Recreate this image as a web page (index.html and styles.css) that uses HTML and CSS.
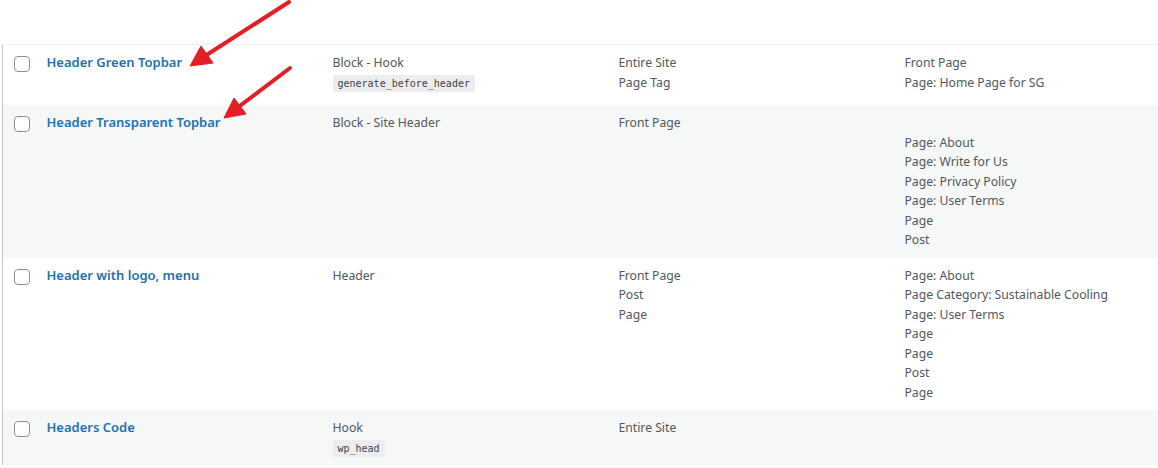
FILE: index.html
```html
<!DOCTYPE html>
<html lang="en">
<head>
<meta charset="utf-8">
<title>Elements</title>
<link rel="stylesheet" href="styles.css">
</head>
<body>
<div class="page">
  <div class="spacer"></div>
  <table class="list">
    <colgroup>
      <col class="c-check">
      <col class="c-col">
      <col class="c-col">
      <col class="c-col">
      <col>
    </colgroup>
    <tbody>
      <tr class="row r1">
        <th class="check"><span class="box"></span></th>
        <td><a class="title" href="#">Header Green Topbar</a></td>
        <td>Block - Hook<br><code class="hook">generate_before_header</code></td>
        <td>Entire Site<br>Page Tag</td>
        <td>Front Page<br>Page: Home Page for SG</td>
      </tr>
      <tr class="row alt">
        <th class="check"><span class="box"></span></th>
        <td><a class="title" href="#">Header Transparent Topbar</a></td>
        <td>Block - Site Header</td>
        <td>Front Page</td>
        <td><br>Page: About<br>Page: Write for Us<br>Page: Privacy Policy<br>Page: User Terms<br>Page<br>Post</td>
      </tr>
      <tr class="row">
        <th class="check"><span class="box"></span></th>
        <td><a class="title" href="#">Header with logo, menu</a></td>
        <td>Header</td>
        <td>Front Page<br>Post<br>Page</td>
        <td>Page: About<br>Page Category: Sustainable Cooling<br>Page: User Terms<br>Page<br>Page<br>Post<br>Page</td>
      </tr>
      <tr class="row alt">
        <th class="check"><span class="box"></span></th>
        <td><a class="title" href="#">Headers Code</a></td>
        <td>Hook<br><code class="hook">wp_head</code></td>
        <td>Entire Site</td>
        <td></td>
      </tr>
    </tbody>
  </table>
  <svg class="arrows" width="1158" height="140" viewBox="0 0 1158 140" aria-hidden="true">
    <g fill="#e31e24" stroke="#e31e24">
      <line x1="289" y1="2" x2="205" y2="56" stroke-width="4" stroke-linecap="round"/>
      <polygon points="190,66 201,46 213,63" stroke-width="1" stroke-linejoin="round"/>
      <line x1="290" y1="68" x2="237" y2="108" stroke-width="4" stroke-linecap="round"/>
      <polygon points="224,118 234,98 246,114" stroke-width="1" stroke-linejoin="round"/>
    </g>
  </svg>
</div>
</body>
</html>
```

FILE: styles.css
```css
html, body {
  margin: 0;
  padding: 0;
  background: #ffffff;
}

body {
  font-family: "Noto Sans", "Open Sans", sans-serif;
  font-size: 12.2px;
  line-height: 19.5px;
  color: #50575e;
}

.page {
  position: relative;
  width: 1158px;
  height: 468px;
  overflow: hidden;
  padding-left: 2px;
  box-sizing: border-box;
}

.spacer {
  height: 44px;
}

.list {
  width: 1156px;
  border-collapse: collapse;
  table-layout: fixed;
  border-left: 1px solid #c3c4c7;
  border-top: 1px solid #f0f0f1;
}

.c-check {
  width: 34px;
}

.c-col {
  width: 286px;
}

.row > td,
.row > th {
  vertical-align: top;
  text-align: left;
  padding: 8px 10px;
  font-weight: 400;
}

.row > th.check {
  padding: 11px 0 0 11px;
}

.row.r1 > td {
  padding-bottom: 13px;
}

.alt {
  background: #f6f7f7;
}

.box {
  display: block;
  width: 16px;
  height: 16px;
  box-sizing: border-box;
  border: 1px solid #8c8f94;
  border-radius: 4px;
  background: #ffffff;
}

.title {
  color: #2271b1;
  font-weight: 600;
  font-size: 13px;
  text-decoration: none;
}

.hook {
  display: inline-block;
  font-family: "DejaVu Sans Mono", "Liberation Mono", monospace;
  font-size: 10px;
  line-height: 13px;
  padding: 2px 5px 2px;
  margin-top: 2px;
  background: #ededed;
  color: #3c434a;
  border-radius: 2px;
}

.arrows {
  position: absolute;
  left: 0;
  top: 0;
  pointer-events: none;
}
```
